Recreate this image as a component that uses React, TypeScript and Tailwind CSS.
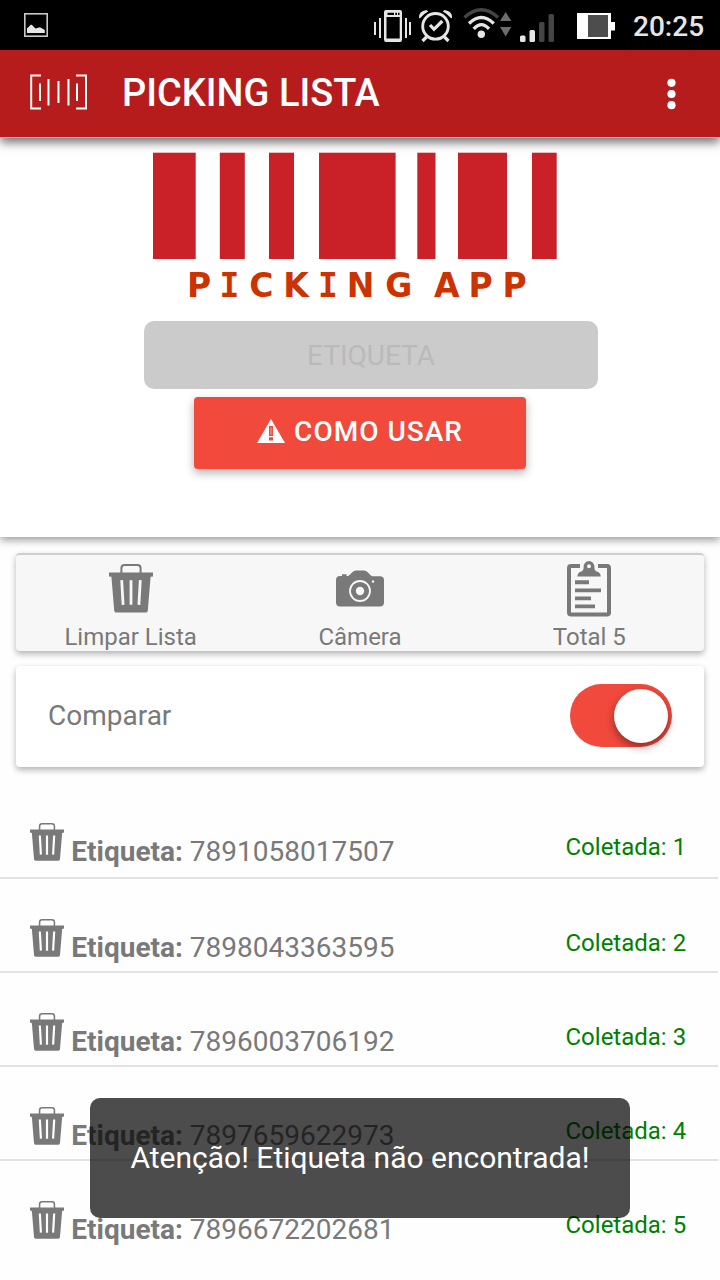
import React from "react";

const items = [
  { code: "7891058017507", count: 1 },
  { code: "7898043363595", count: 2 },
  { code: "7896003706192", count: 3 },
  { code: "7897659622973", count: 4 },
  { code: "7896672202681", count: 5 },
];

function TrashIcon({ className, slot }: { className: string; slot: string }) {
  return (
    <svg viewBox="0 0 44 49" className={className} preserveAspectRatio="none">
      <path
        d="M12.4 9V4.2Q12.4 1 15.6 1H28.4Q31.6 1 31.6 4.2V9"
        fill="none"
        stroke="currentColor"
        strokeWidth="2"
      />
      <path
        d="M0 8.4H44V12.4L41.6 12.8L38.8 46.4Q38.6 48.6 36.6 48.6H7.4Q5.4 48.6 5.2 46.4L2.4 12.8L0 12.4Z"
        fill="currentColor"
      />
      <path d="M12.7 16.2L14.1 40.8M22 16.2V40.8M31.3 16.2L29.9 40.8" stroke={slot} strokeWidth="2.8" fill="none" />
    </svg>
  );
}

function CameraIcon() {
  return (
    <svg viewBox="0 0 48 37" className="block h-[37px] w-12">
      <path
        d="M4 6H6V4.3H10.5V6H12Q14 5 16 2.6Q18 .6 20 .6H28Q30 .6 32 2.6Q34 5 36 6.3H44Q48 6.3 48 10.3V32.5Q48 36.5 44 36.5H4Q0 36.5 0 32.5V10Q0 6 4 6Z"
        fill="#797979"
      />
      <circle cx="24" cy="21" r="10" fill="none" stroke="#f7f7f7" strokeWidth="1.8" />
      <circle cx="24" cy="21" r="4.2" fill="#f7f7f7" />
      <circle cx="37" cy="11.5" r="1.2" fill="#f7f7f7" />
    </svg>
  );
}

function ClipboardIcon() {
  return (
    <svg viewBox="0 0 44 57" className="block h-[57px] w-11" fill="#797979">
      <path
        d="M13 6.1H4Q2 6.1 2 8.1V52.4Q2 54.4 4 54.4H40Q42 54.4 42 52.4V8.1Q42 6.1 40 6.1H31"
        fill="none"
        stroke="#797979"
        strokeWidth="4"
      />
      <path
        d="M10.4 16.5Q10.6 12.3 14.5 11.5Q16.6 11 16.6 8V6.5A5.4 5.4 0 0 1 27.4 6.5V8Q27.4 11 29.5 11.5Q33.4 12.3 33.8 16.5ZM22 4.2A2 2 0 1 0 22 8.2A2 2 0 1 0 22 4.2Z"
        fillRule="evenodd"
      />
      <path d="M8 20.2H22V24.2H8ZM8 28.4H34V32.2H8ZM8 36.4H24V40.2H8ZM8 44.4H28V48.3H8Z" />
    </svg>
  );
}

function StatusIcons() {
  return (
    <svg viewBox="0 0 246 40" className="mt-[2px] block h-10 w-[246px] shrink-0">
      <g fill="#e6e6e6">
        <path d="M0 16H2V29H0ZM5 12H7V32H5ZM31 12H33V32H31ZM35 16H37V29H35Z" />
        <path
          fillRule="evenodd"
          d="M12 4H26Q28 4 28 6V33.5Q28 36 26 36H12Q10 36 10 33.5V6Q10 4 12 4ZM12.5 11V32.5H25.7V11ZM13.5 6.8V9H20V6.8ZM21.3 6.8V9H23V6.8ZM24 6.8V9H25.5V6.8Z"
        />
      </g>
      <g fill="none" stroke="#e6e6e6">
        <circle cx="61.5" cy="20.3" r="12.8" strokeWidth="2.9" />
        <path d="M56 19L60 23.3L68.3 15" strokeWidth="3.2" />
        <path d="M52.5 31L48.5 35M70.5 31L74.5 35" strokeWidth="3.2" />
      </g>
      <path
        d="M45 12Q44.5 5 52.5 4L54.2 5.6Q49.5 8 46 12.3ZM78 12Q78.5 5 70.5 4L68.8 5.6Q73.5 8 77 12.3Z"
        fill="#e6e6e6"
      />
      <g fill="none" strokeWidth="3.3">
        <path d="M90.5 11.5Q107.3 -4 124 11.5" stroke="#454545" />
        <path d="M95 17.5Q107.3 5.5 119.8 17.5" stroke="#e6e6e6" />
        <path d="M99.7 22.8Q107.3 14.5 115 22.8" stroke="#e6e6e6" />
      </g>
      <circle cx="107.3" cy="28.3" r="3.7" fill="#e6e6e6" />
      <path d="M126 15L131.7 6L137.3 15ZM126 21H137.3L131.7 30.5Z" fill="#6d6d6d" />
      <rect x="146" y="29.5" width="5.5" height="6.5" rx="1.5" fill="#e6e6e6" />
      <rect x="155.5" y="24" width="5.5" height="12" rx="1.5" fill="#e6e6e6" />
      <rect x="165" y="16" width="5.5" height="20" rx="1.5" fill="#454545" />
      <rect x="174.5" y="8" width="5.5" height="28" rx="1.5" fill="#454545" />
      <path d="M203 7H237V16H241V24.5H237V33H203Z" fill="#fff" />
      <rect x="214" y="9" width="20" height="22" fill="#4d4d4d" />
    </svg>
  );
}

function Logo() {
  return (
    <svg viewBox="0 0 404 160" className="block h-[160px] w-[404px] shrink-0 overflow-visible">
      <g fill="#c92127">
        <rect x="0" y=".7" width="42.7" height="106.3" />
        <rect x="66.8" y=".7" width="25" height="106.3" />
        <rect x="116" y=".7" width="25" height="106.3" />
        <rect x="166" y=".7" width="76.6" height="106.3" />
        <rect x="264.3" y=".7" width="18.2" height="106.3" />
        <rect x="305" y=".7" width="49" height="106.3" />
        <rect x="379" y=".7" width="24.7" height="106.3" />
      </g>
      <text
        y="144.8"
        fontSize="33"
        fontWeight="700"
        fill="#cc3300"
        className="font-['DejaVu_Sans',sans-serif]"
      >
        <tspan x="34">P</tspan>
        <tspan x="66.5" className="font-['DejaVu_Sans_Mono',monospace]">I</tspan>
        <tspan x="96.3">C</tspan>
        <tspan x="130.3">K</tspan>
        <tspan x="165" className="font-['DejaVu_Sans_Mono',monospace]">I</tspan>
        <tspan x="193.7">N</tspan>
        <tspan x="232.3">G </tspan>
        <tspan x="281">A</tspan>
        <tspan x="315.5">P</tspan>
        <tspan x="349.5">P</tspan>
      </text>
    </svg>
  );
}

function ToolButton({ label, children }: { label: string; children: React.ReactNode }) {
  return (
    <div className="flex flex-1 flex-col items-center">
      <div className="flex h-[68px] items-center pb-[2px]">{children}</div>
      <span className="text-[24px] leading-[28px] whitespace-nowrap">{label}</span>
    </div>
  );
}

export default function App() {
  return (
    <div className="relative flex h-[1280px] w-[720px] flex-col overflow-hidden bg-[#fefefe] font-[Roboto,sans-serif] text-[#797979]">
      <div className="flex h-[50px] shrink-0 items-center bg-black pr-4 pl-6 text-[#e6e6e6]">
        <svg viewBox="0 0 24 24" className="h-6 w-6">
          <rect x=".8" y=".8" width="22.4" height="22.4" fill="none" stroke="#c8c8c8" strokeWidth="1.6" />
          <path d="M3 20V15.5L7 11.5L8.5 12.5L11.5 15.5L16 14.3L20.8 17V20Z" fill="#e6e6e6" />
        </svg>
        <div className="ml-auto flex items-center">
          <StatusIcons />
          <span className="ml-[13px] w-[71px] pt-1 text-[28px] leading-8 font-medium whitespace-nowrap">20:25</span>
        </div>
      </div>

      <header className="z-10 flex h-[88px] shrink-0 items-center border-b border-[#d8b0b0] bg-[#b71c1c] pr-[43px] pl-[30px] text-white shadow-[0_4px_10px_rgba(0,0,0,0.6)]">
        <svg viewBox="0 0 58 36" className="-mt-1 h-9 w-[58px]" fill="none" stroke="#fff" strokeWidth="2">
          <path d="M11 1.4H1.2V34.6H11M46 1.4H56V34.6H46" />
          <path d="M10 9.5V27M18.5 5V31.5M28.5 7V29M38.5 5V31.5M47 9.5V27" />
        </svg>
        <h1 className="-mt-[2px] ml-[34px] text-[38px] leading-[48px] font-medium whitespace-nowrap">PICKING LISTA</h1>
        <svg viewBox="0 0 10 32" className="ml-auto h-8 w-[10px]" fill="#fff">
          <circle cx="4.5" cy="4.8" r="4.1" />
          <circle cx="4.5" cy="16" r="4.1" />
          <circle cx="4.5" cy="27.2" r="4.1" />
        </svg>
      </header>

      <section className="flex h-[399px] shrink-0 flex-col items-center bg-white pt-[14px] shadow-[0_3px_8px_rgba(0,0,0,0.4)]">
        <div className="mr-[10px]">
          <Logo />
        </div>
        <div className="mt-[8.5px] ml-[22px] flex h-[68px] w-[454px] shrink-0 items-center justify-center rounded-[10px] bg-[#cbcbcb] pt-[2px] text-[28px] text-[#bababa]">
          ETIQUETA
        </div>
        <button className="mt-2 flex h-[72px] w-[332px] shrink-0 items-center justify-center gap-[9px] rounded-[4px] bg-[#f1493c] pb-[2px] text-[28px] font-medium tracking-[1px] text-white shadow-[0_4px_10px_rgba(0,0,0,0.3)]">
          <svg viewBox="0 0 28 24" className="-mt-[2px] h-6 w-7">
            <path d="M14 0L28 24H0Z" fill="#fff" />
            <path d="M12 7H16V17H12ZM12 18.2H16V21.5H12Z" fill="#f1493c" />
            <path d="M13.5 8.3H14.5V15.7H13.5Z" fill="#f6a099" />
          </svg>
          <span>COMO USAR</span>
        </button>
      </section>

      <section className="mx-4 mt-4 flex h-[98px] shrink-0 rounded-[4px] border-t-2 border-[#cecece] bg-[#f7f7f7] shadow-[0_3px_6px_rgba(0,0,0,0.3)]">
        <ToolButton label="Limpar Lista">
          <TrashIcon className="h-[49px] w-11" slot="#f7f7f7" />
        </ToolButton>
        <ToolButton label="Câmera">
          <CameraIcon />
        </ToolButton>
        <ToolButton label="Total 5">
          <ClipboardIcon />
        </ToolButton>
      </section>

      <section className="mx-4 mt-[15px] flex h-[101px] shrink-0 items-center justify-between rounded-[4px] bg-white px-8 pb-[2px] shadow-[0_3px_6px_rgba(0,0,0,0.3)]">
        <span className="text-[28px] leading-8">Comparar</span>
        <div className="flex h-[63px] w-[102px] items-center justify-end rounded-full bg-[#f1493c] pr-1">
          <div className="h-[54px] w-[54px] rounded-full bg-white shadow-[0_4px_8px_rgba(0,0,0,0.4)]" />
        </div>
      </section>

      <ul className="mt-[16px] flex flex-col">
        {items.map((item) => (
          <li
            key={item.code}
            className="mr-[2px] flex h-[94px] shrink-0 items-start border-b-2 border-[#e2e2e2] pt-[40px] pl-[30px] first:h-[96px] last:border-transparent"
          >
            <TrashIcon className="h-[38px] w-[34px] shrink-0" slot="#fefefe" />
            <span className="mt-[13px] ml-[7.3px] text-[28px] leading-8 whitespace-nowrap">
              <b className="font-bold">Etiqueta:</b> {item.code}
            </span>
            <span className="mt-[10px] mr-[31.5px] ml-auto w-[121px] text-[24px] leading-7 whitespace-nowrap text-[#008000]">
              Coletada: {item.count}
            </span>
          </li>
        ))}
      </ul>

      <div
        role="alert"
        className="absolute top-[1098px] left-[90px] flex h-[120px] w-[540px] items-center justify-center rounded-[10px] bg-black/70 pb-[2px] text-[30px] text-white"
      >
        Atenção! Etiqueta não encontrada!
      </div>
    </div>
  );
}
